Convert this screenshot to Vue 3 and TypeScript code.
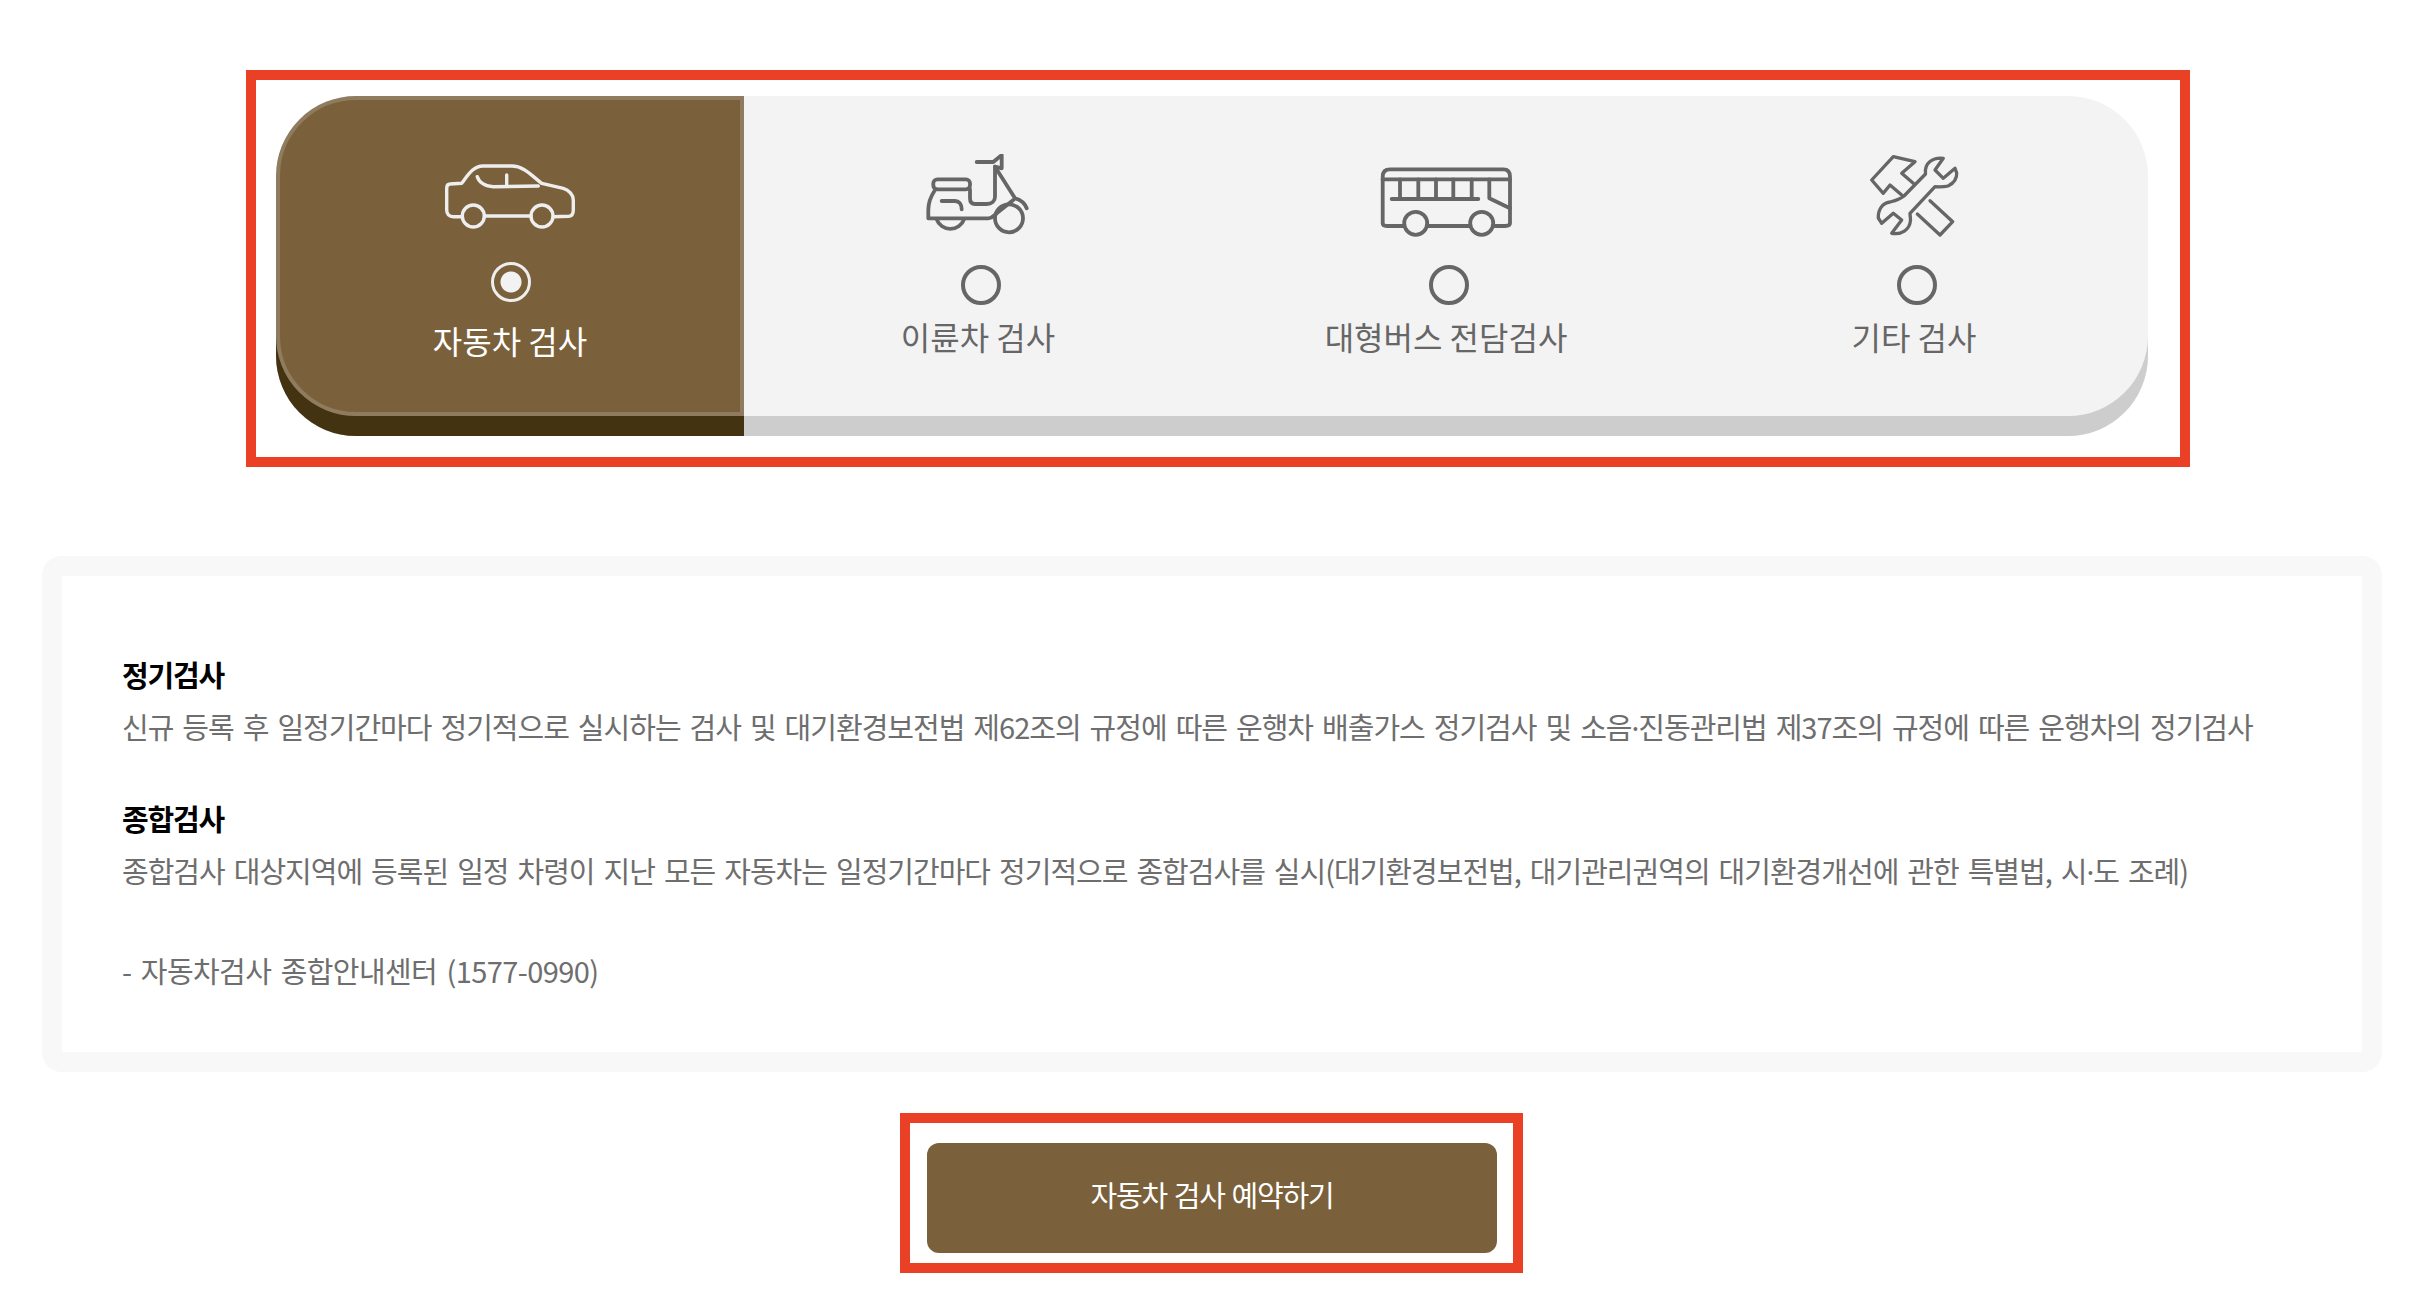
<script setup lang="ts">
import { ref } from 'vue'

const tabs = [
  { id: 'car', label: '자동차 검사' },
  { id: 'bike', label: '이륜차 검사' },
  { id: 'bus', label: '대형버스 전담검사' },
  { id: 'etc', label: '기타 검사' }
]

const current = ref('car')
</script>

<template>
  <div class="page">
    <div class="tabs-wrap">
      <ul class="tabs">
        <li v-for="tab in tabs" :key="tab.id" class="tab" :class="{ on: current === tab.id }" @click="current = tab.id">
          <svg class="icon" viewBox="0 0 140 84" width="140" height="84" fill="none" stroke="currentColor" stroke-linejoin="round" stroke-linecap="round">
            <g v-if="tab.id === 'car'" stroke-width="3.4">
              <path d="M22 62.7H13.3C9 62.7 6.7 60 6.7 56V34.3C6.7 31.5 8 30 10 30L21.7 29.3C28 21 33 12 43 12H72C84 12 92 22 101.7 29.3L123.3 34.3C129 36 133.3 41 133.3 46V56C133.3 60 132 62 129 62.2L113.3 62.7" />
              <path d="M45 62H91" />
              <circle cx="33.3" cy="62" r="11" />
              <circle cx="102" cy="62" r="11" />
              <path d="M37.3 22.7C39 28 45 32.7 53.3 32.7L98.3 32" />
              <path d="M66.7 21V32" />
            </g>
            <g v-else-if="tab.id === 'bike'" stroke-width="3.8">
              <rect x="25.3" y="25.3" width="36.7" height="10" rx="4" />
              <path d="M27 36C23 42 20.3 50 20.3 56V64.3H80.3C84 64.3 85.5 62 88.7 59.3L105.3 46" />
              <path d="M62 35.3V44.3C62 48 64 50 67 50H78.7C84 50 87 47 87 42.7V12.7L107 44.3C113 46 117 50 118.7 54.3" />
              <path d="M68.7 8H85.3L93.7 1V14.3L87 12.7" />
              <path d="M28.7 65.3A14.5 14.5 0 0 0 56 65.3" />
              <circle cx="101" cy="64.3" r="14" />
              <path d="M33.7 47H47C51 47 53.7 50 53.7 55.3" />
            </g>
            <g v-else-if="tab.id === 'bus'" stroke-width="3.8">
              <path d="M27.3 72H10.7C8 72 6.7 71 6.7 69.3V22.7C6.7 18 9 15.3 14 15.3H127.3C132 15.3 134 18 134 22.7V69.3C134 71 133 72 129 72H117.3" />
              <path d="M51.3 72H94" />
              <circle cx="39.7" cy="69.3" r="11.5" />
              <circle cx="105.7" cy="69.3" r="11.5" />
              <path d="M6.7 25.3H134" />
              <path d="M15.7 45H102.3" />
              <path d="M24 25.3V45M42.3 25.3V45M60 25.3V45M77.3 25.3V45M95.7 25.3V45" />
              <path d="M113.3 25.3V44.3L134 54.3" />
            </g>
            <g v-else stroke-width="3.3">
              <path d="M99.3 4.3C89 3 80 9 81.5 20L60 42C55 46 50 47 46 48C38 49 34 56 34.3 64L37.7 69.3L49.3 59.3L57.7 66L47.7 79.3C57 81 66 76 66.5 66C66.5 63 66 61 66 59.3L91 32.7C96 33 100 33 104 32C110 29 113 24 112.7 19L111 14.3L99.3 24.3L91 16Z" />
              <path d="M69.3 29.3L57.7 19.3L71 7.7L49.3 2.7L27.7 26L39.3 39.3L46 31L57.7 41" />
              <path d="M86 46.7L108.7 67.7L96 81L73.3 60" />
            </g>
          </svg>
          <span class="radio"></span>
          <span class="label">{{ tab.label }}</span>
        </li>
      </ul>
      <i class="mark mark-tabs"></i>
    </div>

    <div class="panel">
      <h3>정기검사</h3>
      <p>신규 등록 후 일정기간마다 정기적으로 실시하는 검사 및 대기환경보전법 제62조의 규정에 따른 운행차 배출가스 정기검사 및 소음<span class="dot">·</span>진동관리법 제37조의 규정에 따른 운행차의 정기검사</p>
      <h3 class="second">종합검사</h3>
      <p>종합검사 대상지역에 등록된 일정 차령이 지난 모든 자동차는 일정기간마다 정기적으로 종합검사를 실시(대기환경보전법, 대기관리권역의 대기환경개선에 관한 특별법, 시<span class="dot">·</span>도 조례)</p>
      <p class="call">- 자동차검사 종합안내센터 (1577-0990)</p>
    </div>

    <div class="btn-wrap">
      <button class="btn" type="button">자동차 검사 예약하기</button>
      <i class="mark mark-btn"></i>
    </div>
  </div>
</template>

<style scoped>
.page {
  box-sizing: border-box;
  width: 2340px;
  height: 1294px;
  margin-left: 42px;
  padding-top: 96px;
  font-family: "Noto Sans CJK KR", "Noto Sans", sans-serif;
}

.tabs-wrap {
  position: relative;
  width: 1872px;
  margin: 0 auto;
}

.tabs {
  display: flex;
  height: 320px;
  margin: 0;
  padding: 0;
  list-style: none;
  background: #f3f3f3;
  border-radius: 80px;
  box-shadow: 0 20px 0 #cdcdcd;
}

.tab {
  box-sizing: border-box;
  display: flex;
  flex: 0 0 25%;
  flex-direction: column;
  align-items: center;
  padding-top: 58px;
  color: #666;
  cursor: pointer;
}

.tab.on {
  padding-top: 54px;
  color: #eee;
  background: #7a613b;
  border: 4px solid #8f7c5f;
  border-radius: 80px 0 0 80px;
  box-shadow: 0 20px 0 #433311;
}

.icon {
  display: block;
}

.radio {
  box-sizing: border-box;
  width: 40px;
  height: 40px;
  margin: 27px 0 0 6px;
  border: 4px solid #666;
  border-radius: 50%;
}

.tab.on .radio {
  margin: 24px 0 0 2px;
  border: 3px solid #eee;
  background: radial-gradient(circle, #f2f2f2 10px, transparent 11px);
}

.label {
  margin-top: 11px;
  font-size: 32px;
  line-height: 40px;
  white-space: nowrap;
}

.tab.on .label {
  margin-top: 18px;
  color: #fff;
}

.panel {
  box-sizing: border-box;
  height: 516px;
  margin-top: 140px;
  padding: 71px 60px 0;
  background: #fff;
  border: 20px solid #f8f8f8;
  border-radius: 20px;
}

.panel h3 {
  margin: 0;
  font-size: 29px;
  font-weight: 700;
  line-height: 54px;
  letter-spacing: -1.2px;
  color: #000;
}

.panel h3.second {
  margin-top: 38px;
}

.panel p {
  margin: 0;
  font-size: 29px;
  line-height: 50px;
  letter-spacing: -1px;
  word-spacing: 3.5px;
  color: #6e6e6e;
  white-space: nowrap;
}

.panel p.call {
  margin-top: 48px;
  letter-spacing: -0.6px;
}

.dot {
  font-family: "Noto Sans", sans-serif;
}

.btn-wrap {
  position: relative;
  width: 570px;
  margin: 71px auto 0;
}

.btn {
  display: block;
  width: 100%;
  height: 110px;
  padding: 0 0 9px;
  font-family: inherit;
  font-size: 29px;
  letter-spacing: -1.2px;
  word-spacing: 1.5px;
  color: #fff;
  background: #7a613b;
  border: 0;
  border-radius: 12px;
}

.mark {
  position: absolute;
  border: 10px solid #ea4025;
  pointer-events: none;
}

.mark-tabs {
  top: -26px;
  right: -42px;
  bottom: -51px;
  left: -30px;
}

.mark-btn {
  top: -30px;
  right: -26px;
  bottom: -20px;
  left: -27px;
}
</style>

<style>
body {
  background: #fff;
  overflow: hidden;
}
</style>
